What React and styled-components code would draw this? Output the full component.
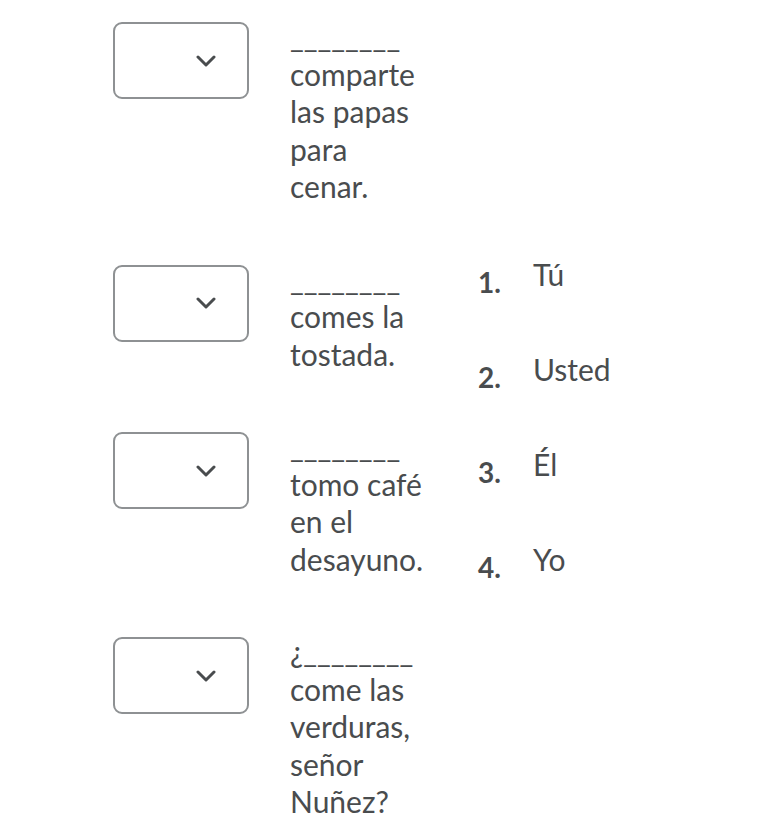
import React from "react";
import styled, { createGlobalStyle } from "styled-components";

const Global = createGlobalStyle`
  html, body { margin: 0; padding: 0; background: #ffffff; }
  body { font-family: Lato, "Open Sans", sans-serif; color: #494c4e; }
`;

const Page = styled.div`
  display: flex;
  align-items: center;
  padding: 22px 0 0 113px;
  width: 772px;
  box-sizing: border-box;
`;

const Questions = styled.div`
  display: flex;
  flex-direction: column;
  gap: 59px;
`;

const Row = styled.div`
  display: flex;
  align-items: flex-start;
  gap: 41px;
`;

const Select = styled.div`
  width: 136px;
  height: 77px;
  flex: none;
  box-sizing: border-box;
  border: 2px solid #8e9193;
  border-radius: 9px;
  background: #fff;
  display: flex;
  align-items: center;
  justify-content: flex-end;
  padding-right: 31px;
`;

const Prompt = styled.div`
  width: 139px;
  font-size: 30px;
  line-height: 37.5px;
  margin-top: -4px;
`;

const Choices = styled.ol`
  list-style: none;
  margin: 0 0 0 49px;
  padding: 0;
  display: flex;
  flex-direction: column;
  gap: 49.5px;
`;

const Choice = styled.li`
  display: flex;
  align-items: flex-start;
  font-size: 30px;
  line-height: 37.5px;
`;

const Num = styled.span`
  width: 55px;
  font-weight: 700;
  font-size: 28px;
  padding-top: 8px;
  color: #494c4e;
`;

const Chevron = () => (
  <svg width="20" height="12" viewBox="0 0 20 12">
    <polyline
      points="2,2 10,10 18,2"
      fill="none"
      stroke="#494c4e"
      strokeWidth="3"
      strokeLinecap="round"
      strokeLinejoin="round"
    />
  </svg>
);

const questions = [
  "________ comparte las papas para cenar.",
  "________ comes la tostada.",
  "________ tomo café en el desayuno.",
  "¿________ come las verduras, señor Nuñez?",
];

const options = ["Tú", "Usted", "Él", "Yo"];

export default function App() {
  return (
    <>
      <Global />
      <Page>
        <Questions>
          {questions.map((q) => (
            <Row key={q}>
              <Select>
                <Chevron />
              </Select>
              <Prompt>{q}</Prompt>
            </Row>
          ))}
        </Questions>
        <Choices>
          {options.map((o, i) => (
            <Choice key={o}>
              <Num>{i + 1}.</Num>
              <span>{o}</span>
            </Choice>
          ))}
        </Choices>
      </Page>
    </>
  );
}
